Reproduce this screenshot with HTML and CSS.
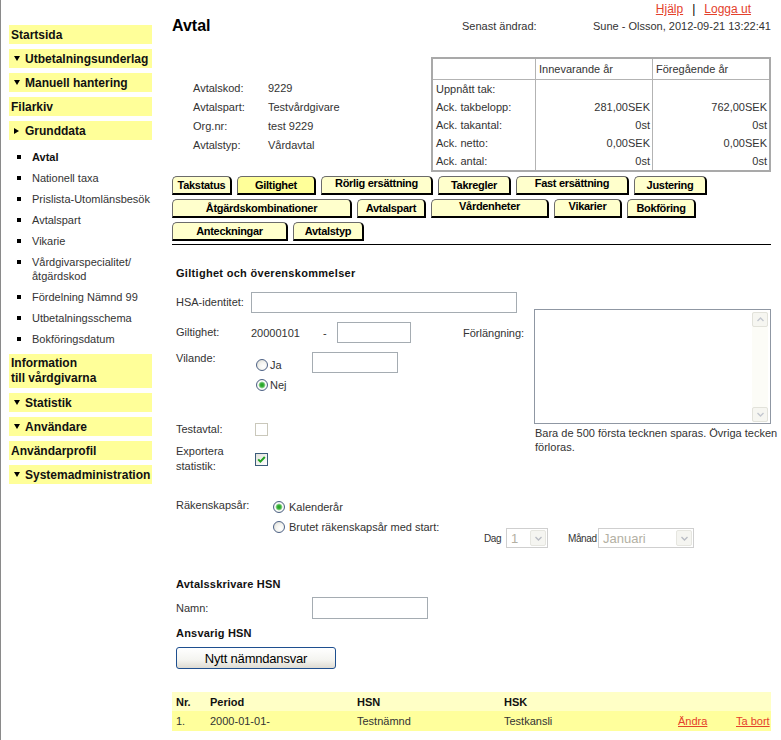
FILE: index.html
```html
<!DOCTYPE html>
<html lang="sv">
<head>
<meta charset="utf-8">
<title>Avtal</title>
<link rel="stylesheet" href="styles.css">
</head>
<body>
<div class="page">
  <nav class="sidebar">
    <div class="nav-head">Startsida</div>
    <div class="nav-head"><span class="tri tri--down"></span>Utbetalningsunderlag</div>
    <div class="nav-head"><span class="tri tri--down"></span>Manuell hantering</div>
    <div class="nav-head">Filarkiv</div>
    <div class="nav-head"><span class="tri tri--right"></span>Grunddata</div>
    <ul class="subnav">
      <li class="subnav__item subnav__item--active">Avtal</li>
      <li class="subnav__item">Nationell taxa</li>
      <li class="subnav__item">Prislista-Utomlänsbesök</li>
      <li class="subnav__item">Avtalspart</li>
      <li class="subnav__item">Vikarie</li>
      <li class="subnav__item">Vårdgivarspecialitet/<br>åtgärdskod</li>
      <li class="subnav__item">Fördelning Nämnd 99</li>
      <li class="subnav__item">Utbetalningsschema</li>
      <li class="subnav__item">Bokföringsdatum</li>
    </ul>
    <div class="nav-head nav-head--tall">Information<br>till vårdgivarna</div>
    <div class="nav-head"><span class="tri tri--down"></span>Statistik</div>
    <div class="nav-head"><span class="tri tri--down"></span>Användare</div>
    <div class="nav-head">Användarprofil</div>
    <div class="nav-head"><span class="tri tri--down"></span>Systemadministration</div>
  </nav>

  <main class="main">
    <div class="toplinks">
      <a class="link" href="#">Hjälp</a><span class="toplinks__sep">|</span><a class="link" href="#">Logga ut</a>
    </div>
    <div class="titlebar">
      <h1 class="title">Avtal</h1>
      <span class="changed-label">Senast ändrad:</span>
      <span class="changed-value">Sune - Olsson, 2012-09-21 13:22:41</span>
    </div>

    <div class="overview">
      <dl class="facts">
        <dt>Avtalskod:</dt><dd>9229</dd>
        <dt>Avtalspart:</dt><dd>Testvårdgivare</dd>
        <dt>Org.nr:</dt><dd>test 9229</dd>
        <dt>Avtalstyp:</dt><dd>Vårdavtal</dd>
      </dl>
      <table class="summary">
        <colgroup><col class="summary__c1"><col class="summary__c2"><col class="summary__c3"></colgroup>
        <thead>
          <tr><th></th><th>Innevarande år</th><th>Föregående år</th></tr>
        </thead>
        <tbody>
          <tr><td>Uppnått tak:</td><td></td><td></td></tr>
          <tr><td>Ack. takbelopp:</td><td class="num">281,00SEK</td><td class="num">762,00SEK</td></tr>
          <tr><td>Ack. takantal:</td><td class="num">0st</td><td class="num">0st</td></tr>
          <tr><td>Ack. netto:</td><td class="num">0,00SEK</td><td class="num">0,00SEK</td></tr>
          <tr><td>Ack. antal:</td><td class="num">0st</td><td class="num">0st</td></tr>
        </tbody>
      </table>
    </div>

    <div class="tabs">
      <div class="tabs__row">
        <span class="tab tab--takstatus">Takstatus</span>
        <span class="tab tab--giltighet tab--active">Giltighet</span>
        <span class="tab tab--rorlig tab--raised">Rörlig ersättning</span>
        <span class="tab tab--takregler">Takregler</span>
        <span class="tab tab--fast tab--raised">Fast ersättning</span>
        <span class="tab tab--justering">Justering</span>
      </div>
      <div class="tabs__row">
        <span class="tab tab--atgard">Åtgärdskombinationer</span>
        <span class="tab tab--avtalspart">Avtalspart</span>
        <span class="tab tab--vardenheter tab--raised">Vårdenheter</span>
        <span class="tab tab--vikarier tab--raised">Vikarier</span>
        <span class="tab tab--bokforing">Bokföring</span>
      </div>
      <div class="tabs__row">
        <span class="tab tab--anteckningar">Anteckningar</span>
        <span class="tab tab--avtalstyp">Avtalstyp</span>
      </div>
    </div>

    <section class="form">
      <h2 class="section-title">Giltighet och överenskommelser</h2>
      <div class="validity">
        <div class="validity__left">
          <div class="row">
            <label class="row__label row__label--hsa">HSA-identitet:</label>
            <input class="input input--hsa" type="text">
          </div>
          <div class="row row--gap">
            <span class="row__label row__label--hsa">Giltighet:</span>
            <span class="date-from">20000101</span>
            <span class="date-dash">-</span>
            <input class="input input--date" type="text">
            <span class="extend-label">Förlängning:</span>
          </div>
          <div class="row row--gap row--top">
            <span class="row__label row__label--vilande">Vilande:</span>
            <div class="radios">
              <div class="option"><span class="radio"></span><span class="option__text">Ja</span></div>
              <div class="option"><span class="radio radio--checked"></span><span class="option__text">Nej</span></div>
            </div>
            <input class="input input--vilande" type="text">
          </div>
          <div class="row row--test">
            <span class="row__label row__label--check">Testavtal:</span>
            <span class="check check--disabled"></span>
          </div>
          <div class="row row--export">
            <span class="row__label row__label--check row__label--wrap">Exportera statistik:</span>
            <span class="check"><svg width="9" height="9" viewBox="0 0 9 9"><path d="M1.2 4.4 L3.4 6.6 L7.8 2" fill="none" stroke="#21a121" stroke-width="2"/></svg></span>
          </div>
        </div>
        <div class="validity__right">
          <div class="textarea">
            <div class="scrollbar">
              <span class="scrollbar__btn"><svg width="7" height="5" viewBox="0 0 7 5"><path d="M0.5 4 L3.5 1 L6.5 4" fill="none" stroke="#c3c7cf" stroke-width="1.4"/></svg></span>
              <span class="scrollbar__btn"><svg width="7" height="5" viewBox="0 0 7 5"><path d="M0.5 1 L3.5 4 L6.5 1" fill="none" stroke="#c3c7cf" stroke-width="1.4"/></svg></span>
            </div>
          </div>
          <p class="note">Bara de 500 första tecknen sparas. Övriga tecken förloras.</p>
        </div>
      </div>

      <div class="fiscal">
        <span class="fiscal__label">Räkenskapsår:</span>
        <div class="fiscal__options">
          <div class="option option--fiscal"><span class="radio radio--checked"></span><span class="option__text">Kalenderår</span></div>
          <div class="fiscal__split">
            <div class="option option--fiscal option--broken"><span class="radio"></span><span class="option__text">Brutet räkenskapsår med start:</span></div>
            <div class="selects">
              <span class="selects__label selects__label--dag">Dag</span>
              <span class="select select--dag"><span class="select__value">1</span><span class="select__btn"><svg width="7" height="5" viewBox="0 0 7 5"><path d="M0.5 1 L3.5 4 L6.5 1" fill="none" stroke="#b9bcc4" stroke-width="1.4"/></svg></span></span>
              <span class="selects__label selects__label--manad">Månad</span>
              <span class="select select--manad"><span class="select__value">Januari</span><span class="select__btn"><svg width="7" height="5" viewBox="0 0 7 5"><path d="M0.5 1 L3.5 4 L6.5 1" fill="none" stroke="#b9bcc4" stroke-width="1.4"/></svg></span></span>
            </div>
          </div>
        </div>
      </div>

      <h3 class="subhead subhead--first">Avtalsskrivare HSN</h3>
      <div class="row row--namn">
        <label class="row__label row__label--namn">Namn:</label>
        <input class="input input--namn" type="text">
      </div>
      <h3 class="subhead subhead--second">Ansvarig HSN</h3>
      <button class="btn" type="button">Nytt nämndansvar</button>
    </section>

    <table class="resp">
      <colgroup>
        <col class="resp__nr"><col class="resp__period"><col class="resp__hsn"><col class="resp__hsk"><col class="resp__edit"><col class="resp__del">
      </colgroup>
      <thead>
        <tr><th>Nr.</th><th>Period</th><th>HSN</th><th>HSK</th><th></th><th></th></tr>
      </thead>
      <tbody>
        <tr><td>1.</td><td>2000-01-01-</td><td>Testnämnd</td><td>Testkansli</td><td><a class="link" href="#">Ändra</a></td><td><a class="link" href="#">Ta bort</a></td></tr>
      </tbody>
    </table>
  </main>
</div>
</body>
</html>
```

FILE: styles.css
```css
* { box-sizing: border-box; }
html, body { margin: 0; padding: 0; background: #fff; }
body {
  font-family: "Liberation Sans", Arial, Helvetica, sans-serif;
  font-size: 11px;
  color: #333;
  overflow: hidden;
}
.page {
  display: flex;
  align-items: flex-start;
  width: 781px;
  height: 740px;
  border-left: 1px solid #8a8a8a;
}

/* ---------- sidebar ---------- */
.sidebar { flex: none; width: 151px; padding: 25px 0 0 8px; }
.nav-head {
  display: flex;
  align-items: center;
  height: 19px;
  margin-bottom: 5px;
  padding-left: 2px;
  background: #ffff99;
  font-size: 12px;
  font-weight: bold;
  color: #111;
  white-space: nowrap;
}
.nav-head--tall { display: block; height: 34px; padding-top: 2px; line-height: 15px; }
.tri { flex: none; width: 0; height: 0; margin: 0 5px 0 3px; }
.tri--down { border-left: 3px solid transparent; border-right: 3px solid transparent; border-top: 5px solid #000; }
.tri--right { border-top: 3px solid transparent; border-bottom: 3px solid transparent; border-left: 5px solid #000; margin-right: 6px; }

.subnav { list-style: none; margin: 0 0 5px; padding: 1px 0 0; }
.subnav__item {
  display: flex;
  align-items: flex-start;
  padding: 4px 0 3px;
  line-height: 14px;
  color: #333;
}
.subnav__item::before {
  content: "";
  flex: none;
  width: 4px;
  height: 4px;
  margin: 5px 11px 0 8px;
  background: #000;
}
.subnav__item--active { font-weight: bold; color: #111; }

/* ---------- main ---------- */
.main { flex: none; width: 599px; margin-left: 20px; }
.link { color: #e4412b; text-decoration: underline; }
.toplinks {
  display: flex;
  justify-content: flex-end;
  height: 16px;
  padding: 3px 20px 0 0;
  font-size: 12px;
  line-height: 13px;
}
.toplinks__sep { color: #000; margin: 0 9px; }

.titlebar { display: flex; align-items: center; height: 20px; }
.title { margin: 0; width: 290px; font-size: 16px; line-height: 20px; font-weight: bold; color: #000; }
.changed-value { margin-left: auto; }

.overview { display: flex; margin-top: 21px; }
.facts {
  margin: 0;
  width: 259px;
  padding: 21px 0 0 21px;
  display: grid;
  grid-template-columns: 75px 1fr;
  grid-auto-rows: 19px;
  align-items: center;
  align-content: start;
}
.facts dt, .facts dd { margin: 0; }

.summary {
  width: 340px;
  table-layout: fixed;
  border: 2px solid #a9a9a9;
  border-spacing: 0;
  font-size: 11px;
}
.summary__c1 { width: 102px; }
.summary__c2 { width: 117px; }
.summary__c3 { width: 117px; }
.summary th {
  height: 21px;
  padding: 0 3px;
  text-align: left;
  font-weight: normal;
  border-bottom: 1px solid #b3b3b3;
}
.summary td { height: 18px; padding: 0 3px; }
.summary th + th, .summary td + td { border-left: 1px solid #b3b3b3; }
.summary .num { text-align: right; padding-right: 2px; }

/* ---------- tabs ---------- */
.tabs {
  display: flex;
  flex-direction: column;
  gap: 4px;
  margin-top: 4px;
  padding-bottom: 3px;
  border-bottom: 1px solid #000;
}
.tabs__row { display: flex; gap: 5px; }
.tab {
  flex: none;
  height: 19px;
  border: 1px solid #6b6b6b;
  border-right: 2px solid #000;
  border-bottom: 2px solid #000;
  border-radius: 5px 5px 0 0;
  background: #ffffcc;
  font-size: 11px;
  font-weight: bold;
  line-height: 16px;
  letter-spacing: -0.3px;
  text-align: center;
  color: #000;
  white-space: nowrap;
}
.tab--active { background: #ffff99; }
.tab--raised { line-height: 12px; }
.tab--takstatus { width: 60px; }
.tab--giltighet { width: 79px; }
.tab--rorlig { width: 112px; }
.tab--takregler { width: 73px; }
.tab--fast { width: 113px; }
.tab--justering { width: 73px; }
.tab--atgard { width: 180px; }
.tab--avtalspart { width: 69px; }
.tab--vardenheter { width: 118px; }
.tab--vikarier { width: 68px; }
.tab--bokforing { width: 69px; }
.tab--anteckningar { width: 116px; }
.tab--avtalstyp { width: 71px; }

/* ---------- form ---------- */
.form { padding-left: 4px; }
.section-title {
  margin: 21px 0 0;
  font-size: 11px;
  line-height: 14px;
  font-weight: bold;
  letter-spacing: 0.3px;
  color: #111;
}
.validity { display: flex; margin-top: 12px; }
.validity__left { flex: none; width: 358px; }
.validity__right { flex: none; width: 237px; padding-top: 17px; }

.row { display: flex; align-items: center; }
.row--gap { margin-top: 9px; }
.row--top { align-items: flex-start; }
.row--test { margin-top: 28px; }
.row--export { margin-top: 8px; }
.row__label { flex: none; line-height: 13px; }
.row__label--hsa { width: 75px; }
.row__label--vilande { width: 80px; }
.row__label--check { width: 79px; }
.row__label--wrap { line-height: 15px; }
.row__label--namn { width: 136px; }

.input {
  flex: none;
  height: 21px;
  margin: 0;
  padding: 0 3px;
  border: 1px solid #a5acb2;
  background: #fff;
  font: inherit;
}
.input--hsa { width: 266px; }
.input--date { width: 74px; }
.input--vilande { width: 86px; }
.input--namn { width: 116px; height: 22px; }

.date-from { flex: none; width: 72px; }
.date-dash { flex: none; width: 14px; }
.extend-label { margin-left: 52px; }

.radios { flex: none; width: 56px; padding-top: 3px; }
.option { display: flex; align-items: center; height: 20px; }
.option__text { margin-left: 2px; white-space: nowrap; }
.radio {
  flex: none;
  width: 12px;
  height: 12px;
  border-radius: 50%;
  border: 1px solid #4d6185;
  background: radial-gradient(circle at 65% 65%, #ffffff 0, #f4f4f0 45%, #d6d6ce 100%);
}
.radio--checked {
  background: radial-gradient(circle, #1f9e1f 0, #3fb43f 2px, #9bd69b 3px, #ffffff 3.8px, #f4f4f0 4.6px, #d6d6ce 100%);
}

.check {
  flex: none;
  display: flex;
  align-items: center;
  justify-content: center;
  width: 13px;
  height: 13px;
  border: 1px solid #3b5b7a;
  background: linear-gradient(135deg, #e2e2dc, #ffffff);
}
.check--disabled { border-color: #cac8bb; background: #fff; }

.textarea {
  display: flex;
  justify-content: flex-end;
  height: 115px;
  padding: 2px 2px 1px;
  border: 1px solid #8f97a3;
  background: #fff;
}
.scrollbar {
  width: 16px;
  display: flex;
  flex-direction: column;
  justify-content: space-between;
  background: #fcfcf7;
}
.scrollbar__btn {
  display: flex;
  align-items: center;
  justify-content: center;
  height: 15px;
  border: 1px solid #e2e2da;
  border-radius: 2px;
  background: #f6f6f1;
}
.note { width: 250px; margin: 2px 0 0 1px; line-height: 14px; }

.fiscal { display: flex; margin-top: 23px; }
.fiscal__label { flex: none; width: 97px; padding-top: 2px; line-height: 13px; }
.option--fiscal .option__text { margin-left: 4px; }
.fiscal__split { display: flex; align-items: flex-start; }
.option--broken { width: 211px; }
.selects { display: flex; align-items: center; margin-top: 11px; }
.selects__label { flex: none; font-size: 10px; letter-spacing: -0.4px; white-space: nowrap; }
.selects__label--dag { width: 22px; }
.selects__label--manad { width: 30px; margin-left: 20px; }
.select {
  flex: none;
  display: flex;
  align-items: center;
  justify-content: space-between;
  height: 20px;
  padding: 1px;
  border: 1px solid #cfcfcf;
  background: #fff;
}
.select--dag { width: 42px; }
.select--manad { width: 96px; }
.select__value { padding-left: 3px; font-size: 13px; color: #b3b0a3; }
.select__btn {
  display: flex;
  align-items: center;
  justify-content: center;
  width: 16px;
  height: 16px;
  border: 1px solid #e6e6e0;
  border-radius: 2px;
  background: #f5f5f1;
}

.subhead {
  margin: 0;
  font-size: 11px;
  line-height: 14px;
  font-weight: bold;
  letter-spacing: 0.2px;
  color: #111;
}
.subhead--first { margin-top: 29px; }
.subhead--second { margin-top: 7px; }
.row--namn { margin-top: 6px; }

.btn {
  display: block;
  width: 160px;
  height: 22px;
  margin-top: 7px;
  padding: 0;
  border: 1px solid #1e4f8f;
  border-radius: 3px;
  background: linear-gradient(#ffffff, #f4f4f0 60%, #dedbd2);
  font-family: inherit;
  font-size: 13px;
  letter-spacing: -0.2px;
  color: #000;
}

/* ---------- responsibility table ---------- */
.resp {
  width: 599px;
  margin-top: 23px;
  table-layout: fixed;
  border-spacing: 0;
  font-size: 11px;
}
.resp__nr { width: 38px; }
.resp__period { width: 147px; }
.resp__hsn { width: 147px; }
.resp__hsk { width: 174px; }
.resp__edit { width: 58px; }
.resp__del { width: 35px; }
.resp th {
  height: 19px;
  padding: 0;
  background: #ffffc6;
  text-align: left;
  font-weight: bold;
  color: #111;
}
.resp td { height: 20px; padding: 0; background: #ffff9c; white-space: nowrap; }
.resp th:first-child, .resp td:first-child { padding-left: 4px; }
```
